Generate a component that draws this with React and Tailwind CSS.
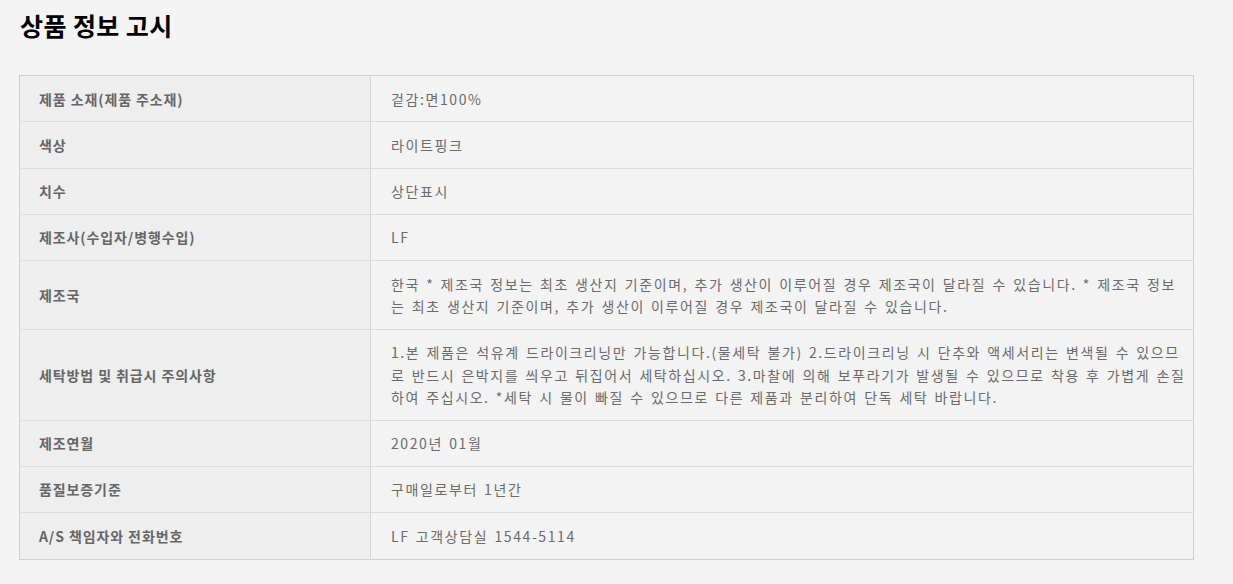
import React from 'react';

// multi-line values are kept as the lines they show on the page
const rows = [
  ['제품 소재(제품 주소재)', '겉감:면100%'],
  ['색상', '라이트핑크'],
  ['치수', '상단표시'],
  ['제조사(수입자/병행수입)', 'LF'],
  ['제조국', [
    '한국 * 제조국 정보는 최초 생산지 기준이며, 추가 생산이 이루어질 경우 제조국이 달라질 수 있습니다. * 제조국 정보',
    '는 최초 생산지 기준이며, 추가 생산이 이루어질 경우 제조국이 달라질 수 있습니다.',
  ]],
  ['세탁방법 및 취급시 주의사항', [
    '1.본 제품은 석유계 드라이크리닝만 가능합니다.(물세탁 불가) 2.드라이크리닝 시 단추와 액세서리는 변색될 수 있으므',
    '로 반드시 은박지를 씌우고 뒤집어서 세탁하십시오. 3.마찰에 의해 보푸라기가 발생될 수 있으므로 착용 후 가볍게 손질',
    '하여 주십시오. *세탁 시 물이 빠질 수 있으므로 다른 제품과 분리하여 단독 세탁 바랍니다.',
  ]],
  ['제조연월', '2020년 01월'],
  ['품질보증기준', '구매일로부터 1년간'],
  ['A/S 책임자와 전화번호', 'LF 고객상담실 1544-5114'],
];

export default function App() {
  return (
    <div className="min-h-[584px] bg-[#f4f4f4] pt-[8px] pl-[19px]" style={{ fontFamily: '"Noto Sans CJK KR", "Noto Sans", sans-serif' }}>
      <h2 className="pl-[1px] text-[25px] font-bold leading-[34px] tracking-[0.4px] text-black">상품 정보 고시</h2>

      <table className="mt-[33px] w-[1175px] table-fixed border-collapse border border-[#cfcfcf] text-[14px] leading-[22.3px]">
        <colgroup>
          <col className="w-[351px]" />
          <col />
        </colgroup>
        <tbody>
          {rows.map(([label, value]) => (
            <tr key={label} className="border-b border-[#dcdcdc] last:border-b-0">
              <th className="border-r border-[#d6d6d6] bg-[#eeeeee] px-[19px] py-[11.5px] text-left align-middle font-bold tracking-[0.9px] text-[#666]">
                {label}
              </th>
              <td className="bg-[#f3f3f3] py-[11.5px] pl-[20px] pr-0 align-middle tracking-[1.6px] [word-spacing:1.5px] text-[#6b6b6b]">
                {Array.isArray(value)
                  ? value.map((line) => (
                      <span key={line} className="block whitespace-nowrap">{line}</span>
                    ))
                  : value}
              </td>
            </tr>
          ))}
        </tbody>
      </table>
    </div>
  );
}
